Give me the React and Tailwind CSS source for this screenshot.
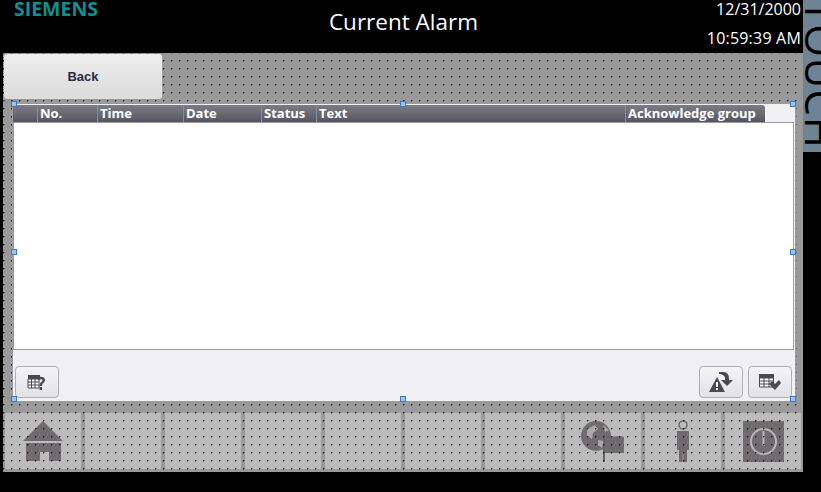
const panelDots = 'bg-[radial-gradient(circle_at_0.75px_0.75px,#1a1a1a_0.6px,transparent_0.95px)] bg-[size:8px_8px] bg-[position:0px_7px]';
const navDots = 'bg-[radial-gradient(circle_at_0.75px_0.75px,#1a1a1a_0.6px,transparent_0.95px)] bg-[size:8px_8px] bg-[position:6px_7px]';

function Handle({ className }) {
  return <span className={`absolute w-[6px] h-[6px] bg-[#9cc2ee] border border-[#3a78c8] ${className}`} />;
}

function ToolButton({ children }) {
  return (
    <button className="w-[44px] h-[32px] rounded-[4px] border border-[#b0b0b4] bg-gradient-to-b from-[#f4f4f6] to-[#e2e2e4] flex items-center justify-center">
      {children}
    </button>
  );
}

function HomeIcon() {
  return (
    <svg width="42" height="42" viewBox="0 0 42 42">
      <path d="M21 1L41 21H1z" fill="#6f6b6e" />
      <path d="M4 23h35v18H27V32h-9v9H4z" fill="#6f6b6e" />
    </svg>
  );
}

function GlobeIcon() {
  return (
    <svg width="44" height="42" viewBox="0 0 44 42">
      <circle cx="15" cy="16" r="15" fill="#6f6b6e" />
      <path d="M6 9l8-4 3 4-5 4-1 6-5-3zM17 20l6 1-2 7-4-3zM22 5l6 5-4 2z" fill="#a9a7a9" />
      <path d="M22 15h2v27h-2z" fill="#666266" />
      <path d="M24 16c6 3 13-2 19 1v16H24z" fill="#6f6b6e" />
    </svg>
  );
}

function PersonIcon() {
  return (
    <svg width="14" height="42" viewBox="0 0 14 42">
      <circle cx="7" cy="5" r="4" fill="none" stroke="#6f6b6e" strokeWidth="1.6" />
      <path d="M1 11h12v19h-2v12H3V30H1z" fill="#6f6b6e" />
      <path d="M7 32v10" stroke="#a9a7a9" strokeWidth="0.8" />
    </svg>
  );
}

function PowerIcon() {
  return (
    <svg width="41" height="41" viewBox="0 0 41 41">
      <path d="M0 0h41v41H0z" fill="#6f6b6e" />
      <circle cx="20.5" cy="20.5" r="12.5" fill="none" stroke="#b9b7b9" strokeWidth="2" />
      <path d="M20.5 10v15" stroke="#b9b7b9" strokeWidth="2" />
    </svg>
  );
}

const columns = [
  { label: '', w: 'w-[25px]' },
  { label: 'No.', w: 'w-[60px]' },
  { label: 'Time', w: 'w-[86px]' },
  { label: 'Date', w: 'w-[78px]' },
  { label: 'Status', w: 'w-[55px]' },
  { label: 'Text', w: 'w-[309px]' },
  { label: 'Acknowledge group', w: 'w-[139px]' },
];

const navIcons = [<HomeIcon />, null, null, null, null, null, null, <GlobeIcon />, <PersonIcon />, <PowerIcon />];

export default function App() {
  return (
    <div className="w-[821px] h-[492px] bg-black overflow-hidden relative font-['Open_Sans',sans-serif]">
      {/* Header */}
      <header className="h-[53px] w-[803px] flex text-white">
        <div className="w-[160px] pl-[14px] -mt-[3px] text-[#109090] text-[19.5px] font-bold leading-[24px]">SIEMENS</div>
        <div className="flex-1 text-center text-[22.5px] leading-[32px] pt-[6px] pl-[4px]">Current Alarm</div>
        <div className="w-[160px] text-right pr-[2px] text-[16px] leading-[22px]">
          <div className="-mt-[2px]">12/31/2000</div>
          <div className="mt-[7px] tracking-[0.2px]">10:59:39 AM</div>
        </div>
      </header>

      {/* Side strip, only the foot of the big rotated word shows */}
      <div className="absolute left-[803px] top-0 w-[18px] h-[152px] bg-[#6e8496] overflow-hidden">
        <span className="absolute left-[39px] top-0 origin-top-left rotate-90 whitespace-nowrap text-black text-[42px] leading-[42px] tracking-[1px]">TOUCH</span>
      </div>

      {/* Screen */}
      <main className={`ml-[3px] w-[800px] h-[419px] bg-[#999999] ${panelDots} flex flex-col`}>
        <button className="ml-[1px] mt-[1px] w-[158px] h-[45px] rounded-[3px] bg-gradient-to-b from-[#efeeee] to-[#dcdbdb] text-[#2a2a45] text-[13px] font-bold font-['Liberation_Sans',sans-serif]">Back</button>

        {/* Alarm view */}
        <section className="relative ml-[9px] mt-[4px] w-[784px] h-[298px] bg-[#f0f0f2] border-t border-l border-r border-[#9a9aa0] flex flex-col">
          <Handle className="left-[-2px] top-[-3px]" />
          <Handle className="left-[387px] top-[-3px]" />
          <Handle className="right-[-1px] top-[-3px]" />
          <Handle className="left-[-2px] top-[145px]" />
          <Handle className="right-[-1px] top-[145px]" />
          <Handle className="left-[-2px] bottom-[-1px]" />
          <Handle className="left-[387px] bottom-[-1px]" />
          <Handle className="right-[-1px] bottom-[-1px]" />

          <div className="mt-[1px] h-[17px] w-[752px] flex bg-gradient-to-b from-[#7b7b86] via-[#6a6a76] to-[#565660] rounded-tr-[3px]">
            {columns.map((c, i) => (
              <div key={i} className={`${c.w} border-r border-[#8d8d97] shrink-0 last:border-r-0 pl-[2px] text-white text-[13px] font-bold leading-[16px] whitespace-nowrap`}>{c.label}</div>
            ))}
          </div>

          <div className="h-[228px] bg-white border border-[#9a9aa0] mr-[1px]" />

          <div className="flex-1 flex items-start pt-[16px] pl-[2px] pr-[3px] gap-[5px]">
            <ToolButton>
              <svg width="20" height="16" viewBox="0 0 20 16">
                <path d="M1 1h12v4H1z" fill="#4a4a4e" />
                <path d="M1 5h11v9H1z" fill="#fff" stroke="#4a4a4e" />
                <path d="M4.500 5v9M8 5v9M1 8h11M1 11h11" stroke="#4a4a4e" />
                <path d="M10 5c1-3 8-3 8 1 0 3-3 3-3 6h-2.500c0-4 3-4 3-6 0-1-2-1-3 0z" fill="#4a4a4e" />
                <path d="M12.500 13h2.500v3h-2.500z" fill="#4a4a4e" />
              </svg>
            </ToolButton>
            <div className="flex-1" />
            <ToolButton>
              <svg width="24" height="20" viewBox="0 0 24 20">
                <path d="M0 20L8 5l8 15z" fill="#4a4a4e" />
                <path d="M7 10h2v5H7zM7 16h2v2H7z" fill="#fff" />
                <path d="M10 0c6-1 10 1 10 6v2h4l-6 6-6-6h4V6c0-2-3-4-6-4z" fill="#4a4a4e" />
              </svg>
            </ToolButton>
            <ToolButton>
              <svg width="22" height="16" viewBox="0 0 22 16">
                <path d="M0 0h15v4H0z" fill="#4a4a4e" />
                <path d="M.5 4h14v9H.5z" fill="#fff" stroke="#4a4a4e" />
                <path d="M5 4v9M10 4v9M0 7h15M0 10h15" stroke="#4a4a4e" />
                <path d="M10 10l3-3 3 3 4-4 2 3-6 7z" fill="#4a4a4e" />
              </svg>
            </ToolButton>
          </div>
        </section>

        {/* Bottom nav */}
        <nav className="mt-[12px] ml-[2px] flex gap-[4px]">
          {navIcons.map((icon, i) => (
            <div key={i} className="relative w-[76px] h-[56px] bg-[#bcbbbc] flex items-center justify-center">
              {icon}
              <span className={`absolute inset-0 ${navDots}`} />
            </div>
          ))}
        </nav>
      </main>
    </div>
  );
}
